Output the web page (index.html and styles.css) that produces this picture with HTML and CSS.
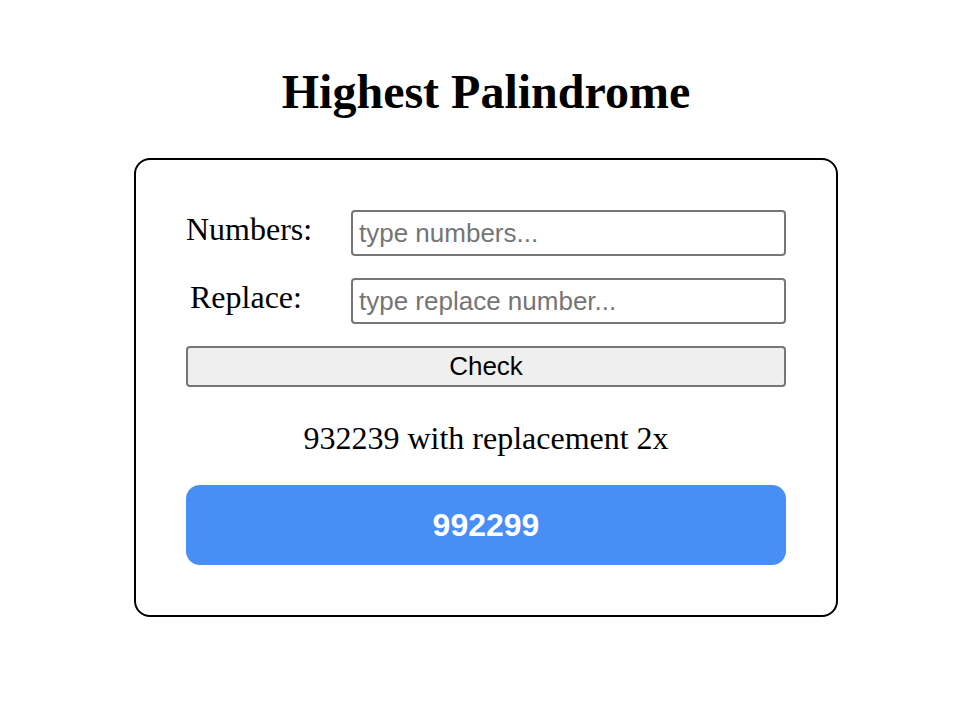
FILE: index.html
```html
<!DOCTYPE html>
<html lang="en">
<head>
<meta charset="utf-8">
<title>Highest Palindrome</title>
<link rel="stylesheet" href="styles.css">
</head>
<body>
<main class="page">
  <h1 class="title">Highest Palindrome</h1>
  <section class="card">
    <div class="row">
      <label class="label" for="numbers">Numbers:</label>
      <input class="field" id="numbers" type="text" placeholder="type numbers...">
    </div>
    <div class="row">
      <label class="label label-replace" for="replace">Replace:</label>
      <input class="field" id="replace" type="text" placeholder="type replace number...">
    </div>
    <button class="check" type="button">Check</button>
    <p class="summary">932239 with replacement 2x</p>
    <div class="result">992299</div>
  </section>
</main>
</body>
</html>
```
FILE: styles.css
```css
html, body {
  margin: 0;
  padding: 0;
  background: #ffffff;
}

.page {
  width: 972px;
  display: flex;
  flex-direction: column;
  align-items: center;
  font-family: "Liberation Serif", "Times New Roman", serif;
  color: #000;
}

.title {
  font-size: 48px;
  font-weight: bold;
  line-height: 55px;
  margin: 64px 0 39px;
}

.card {
  box-sizing: border-box;
  width: 704px;
  border: 2px solid #000;
  border-radius: 16px;
  padding: 50px 50px 50px;
  display: flex;
  flex-direction: column;
}

.row {
  display: flex;
  align-items: center;
  margin-bottom: 22px;
}

.label {
  width: 165px;
  font-size: 32px;
  line-height: 36px;
  padding-bottom: 8px;
}

.label-replace {
  padding-left: 4px;
  width: 161px;
}

.field {
  box-sizing: border-box;
  width: 435px;
  height: 46px;
  border: 2px solid #767676;
  border-radius: 4px;
  padding: 0 6px;
  font-family: "Liberation Sans", Arial, sans-serif;
  font-size: 26px;
  color: #000;
  background: #fff;
  outline: none;
}

.field::placeholder {
  color: #757575;
}

.check {
  box-sizing: border-box;
  width: 600px;
  height: 41px;
  border: 2px solid #767676;
  border-radius: 4px;
  background: #efefef;
  font-family: "Liberation Sans", Arial, sans-serif;
  font-size: 26px;
  color: #000;
  padding: 0;
}

.summary {
  margin: 33px 0 28px;
  text-align: center;
  font-size: 32px;
  line-height: 37px;
}

.result {
  height: 80px;
  border-radius: 14px;
  background: #478ef7;
  color: #fff;
  font-family: "Liberation Sans", Arial, sans-serif;
  font-weight: bold;
  font-size: 32px;
  display: flex;
  align-items: center;
  justify-content: center;
}
```
